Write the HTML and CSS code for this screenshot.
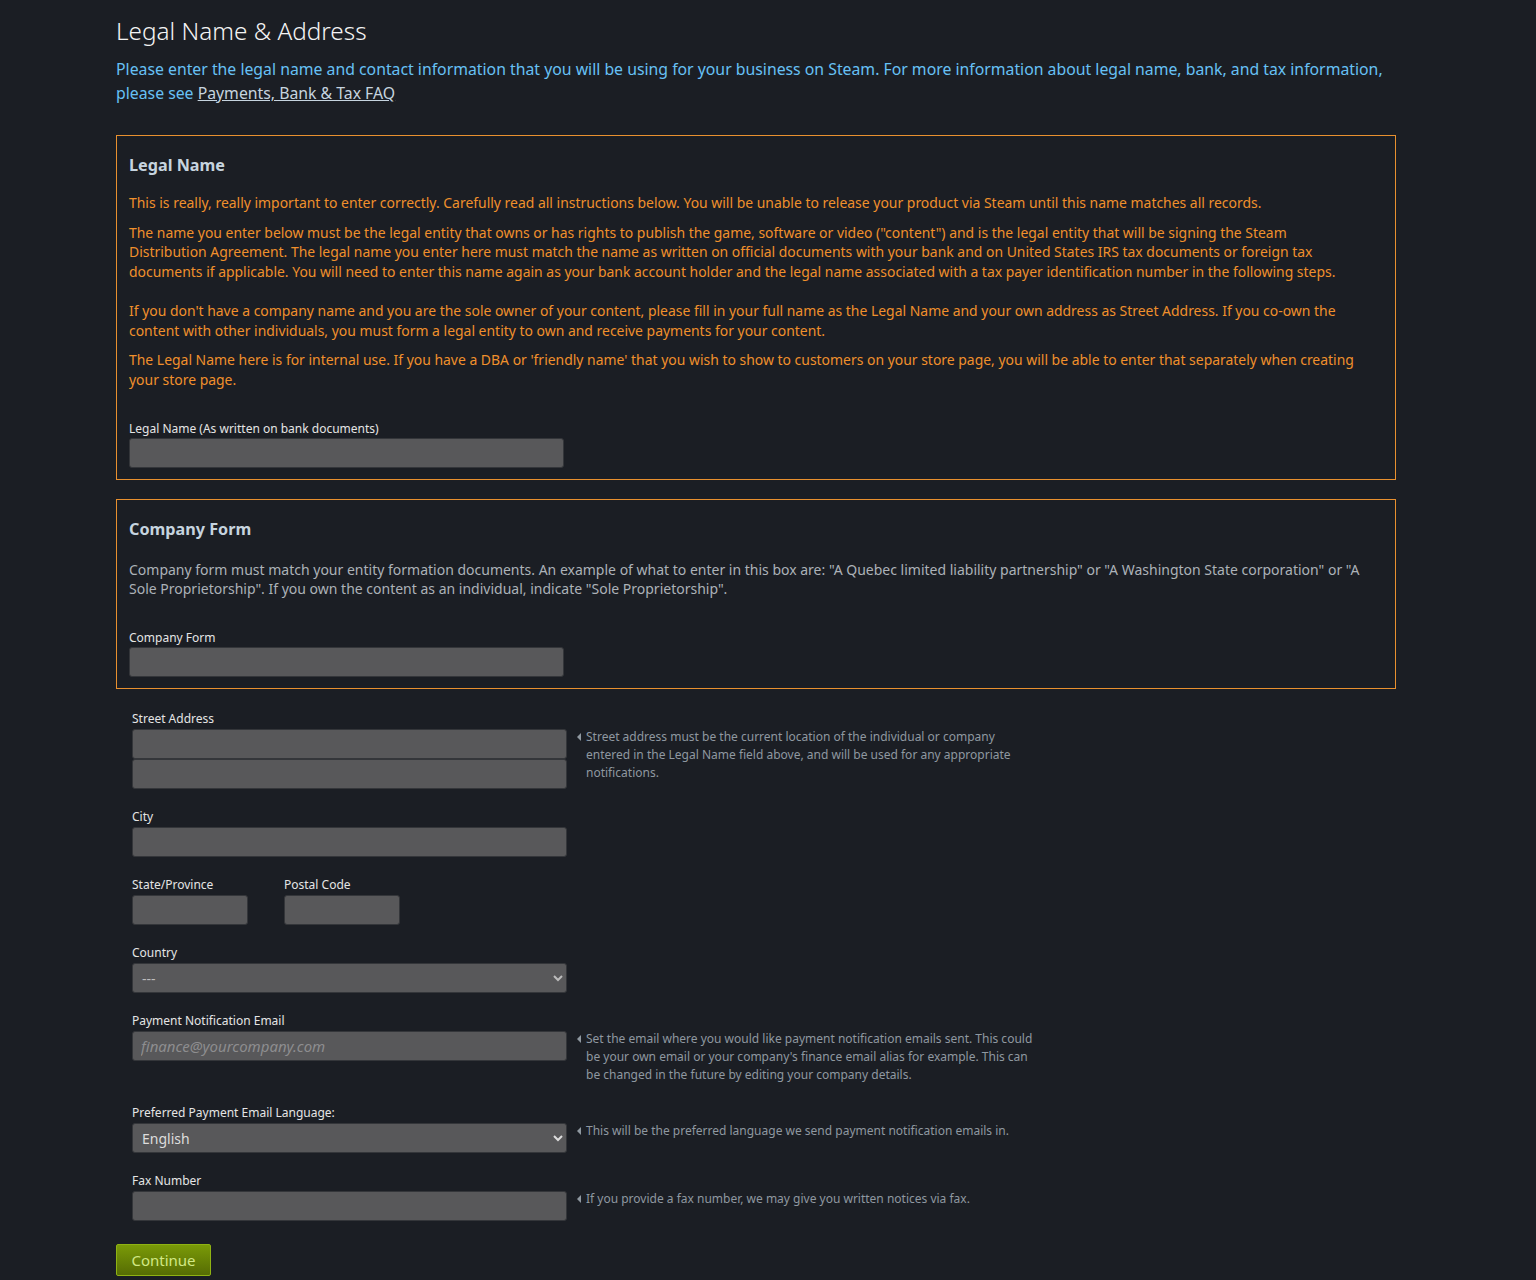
FILE: index.html
```html
<!DOCTYPE html>
<html lang="en">
<head>
    <meta charset="UTF-8">
    <meta name="viewport" content="width=device-width, initial-scale=1.0">
    <title>Legal Name &amp; Address</title>
    <link rel="stylesheet" href="styles.css">
</head>
<body>

<div class="container">
    <h1>Legal Name &amp; Address</h1>
    <p class="intro">Please enter the legal name and contact information that you will be using for your business on Steam. For more information about legal name, bank, and tax information, please see <a href="#">Payments, Bank &amp; Tax FAQ</a></p>

    <div class="box">
        <h2>Legal Name</h2>
        <p class="warn first">This is really, really important to enter correctly. Carefully read all instructions below. You will be unable to release your product via Steam until this name matches all records.</p>
        <p class="warn spaced">The name you enter below must be the legal entity that owns or has rights to publish the game, software or video ("content") and is the legal entity that will be signing the Steam Distribution Agreement. The legal name you enter here must match the name as written on official documents with your bank and on United States IRS tax documents or foreign tax documents if applicable. You will need to enter this name again as your bank account holder and the legal name associated with a tax payer identification number in the following steps.</p>
        <p class="warn">If you don't have a company name and you are the sole owner of your content, please fill in your full name as the Legal Name and your own address as Street Address. If you co-own the content with other individuals, you must form a legal entity to own and receive payments for your content.</p>
        <p class="warn">The Legal Name here is for internal use. If you have a DBA or 'friendly name' that you wish to show to customers on your store page, you will be able to enter that separately when creating your store page.</p>
        <label class="box-label" for="legalName">Legal Name (As written on bank documents)</label>
        <input type="text" id="legalName" class="text-input">
    </div>

    <div class="box">
        <h2>Company Form</h2>
        <p class="info">Company form must match your entity formation documents. An example of what to enter in this box are: "A Quebec limited liability partnership" or "A Washington State corporation" or "A Sole Proprietorship". If you own the content as an individual, indicate "Sole Proprietorship".</p>
        <label class="box-label" for="companyForm">Company Form</label>
        <input type="text" id="companyForm" class="text-input">
    </div>

    <div class="address">
        <div class="row">
            <div class="field">
                <label for="street1">Street Address</label>
                <input type="text" id="street1" class="text-input">
                <input type="text" id="street2" class="text-input">
            </div>
            <div class="note">Street address must be the current location of the individual or company entered in the Legal Name field above, and will be used for any appropriate notifications.</div>
        </div>

        <div class="row">
            <div class="field">
                <label for="city">City</label>
                <input type="text" id="city" class="text-input">
            </div>
        </div>

        <div class="row">
            <div class="field small">
                <label for="state">State/Province</label>
                <input type="text" id="state" class="text-input">
            </div>
            <div class="field small">
                <label for="postal">Postal Code</label>
                <input type="text" id="postal" class="text-input">
            </div>
        </div>

        <div class="row">
            <div class="field">
                <label for="country">Country</label>
                <select id="country" class="select-input muted">
                    <option>---</option>
                </select>
            </div>
        </div>

        <div class="row">
            <div class="field">
                <label for="email">Payment Notification Email</label>
                <input type="text" id="email" class="text-input" placeholder="finance@yourcompany.com">
            </div>
            <div class="note">Set the email where you would like payment notification emails sent. This could be your own email or your company's finance email alias for example. This can be changed in the future by editing your company details.</div>
        </div>

        <div class="row">
            <div class="field">
                <label for="language">Preferred Payment Email Language:</label>
                <select id="language" class="select-input">
                    <option>English</option>
                </select>
            </div>
            <div class="note">This will be the preferred language we send payment notification emails in.</div>
        </div>

        <div class="row">
            <div class="field">
                <label for="fax">Fax Number</label>
                <input type="text" id="fax" class="text-input">
            </div>
            <div class="note">If you provide a fax number, we may give you written notices via fax.</div>
        </div>
    </div>

    <button type="button" class="continue">Continue</button>
</div>

</body>
</html>
```
FILE: styles.css
```css
body {
    margin: 0;
    padding: 0;
    background-color: #1b1e24;
    font-family: "Noto Sans", "Open Sans", sans-serif;
    color: #c6d4df;
}
.container {
    width: 1280px;
    margin-left: 116px;
    padding: 15px 0 20px;
}
h1 {
    margin: 0;
    font-size: 24.3px;
    font-weight: 300;
    line-height: 32px;
    color: #f4f4f4;
}
.intro {
    margin: 10px 0 30px;
    font-size: 15.8px;
    line-height: 24px;
    color: #67c1f5;
}
.intro a {
    color: #c6d4df;
    text-decoration: underline;
}
.box {
    border: 1px solid #e8902f;
    padding: 18px 28px 11px 12px;
    margin-bottom: 19px;
}
.box h2 {
    margin: 0;
    font-size: 16.2px;
    line-height: 22px;
    font-weight: 700;
    color: #c6d4df;
}
.warn {
    margin: 10px 0 0;
    font-size: 13.95px;
    line-height: 19.5px;
    color: #f0902c;
}
.warn.first {
    margin-top: 17px;
}
.warn.spaced {
    margin-bottom: 20px;
}
.info {
    margin: 20px 0 0;
    font-size: 14px;
    line-height: 19px;
    color: #acb2b8;
}
label {
    display: block;
    font-size: 12px;
    line-height: 18px;
    color: #e5e5e5;
    margin-bottom: 1px;
}
.box-label {
    margin-top: 31px;
    margin-bottom: 0;
}
.text-input,
.select-input {
    display: block;
    box-sizing: border-box;
    width: 435px;
    height: 30px;
    margin: 0;
    padding: 0 8px;
    background-color: #58585a;
    border: 1px solid #34363a;
    border-radius: 3px;
    font-family: "Noto Sans", sans-serif;
    font-size: 15px;
    color: #dddddd;
    outline: none;
}
.text-input::placeholder {
    color: #8d8d8f;
    font-style: italic;
}
.select-input {
    padding: 0 5px;
    font-size: 14px;
}
.select-input.muted {
    color: #bcbcbc;
}
.address {
    padding: 2px 0 0 16px;
}
.row {
    display: flex;
    align-items: flex-start;
    gap: 10px;
    margin-bottom: 19px;
}
.row:last-child {
    margin-bottom: 23px;
}
.field.small {
    width: 116px;
    margin-right: 26px;
}
.field.small .text-input {
    width: 116px;
}
.note {
    position: relative;
    margin-top: 18px;
    margin-bottom: 1px;
    padding-left: 9px;
    width: 449px;
    font-size: 12px;
    line-height: 18px;
    color: #8f98a0;
}
.note::before {
    content: "";
    position: absolute;
    left: 0;
    top: 5px;
    border-top: 4px solid transparent;
    border-bottom: 4px solid transparent;
    border-right: 4px solid #8f98a0;
}
.continue {
    box-sizing: border-box;
    width: 95px;
    height: 32px;
    padding: 0;
    border: 1px solid #8fb213;
    border-radius: 2px;
    background: linear-gradient(to bottom, #7a9a08, #566c04);
    font-family: "Noto Sans", sans-serif;
    font-size: 15px;
    color: #d2e885;
    cursor: pointer;
}
.continue:hover {
    background: linear-gradient(to bottom, #8ab00a, #62790a);
}
```
